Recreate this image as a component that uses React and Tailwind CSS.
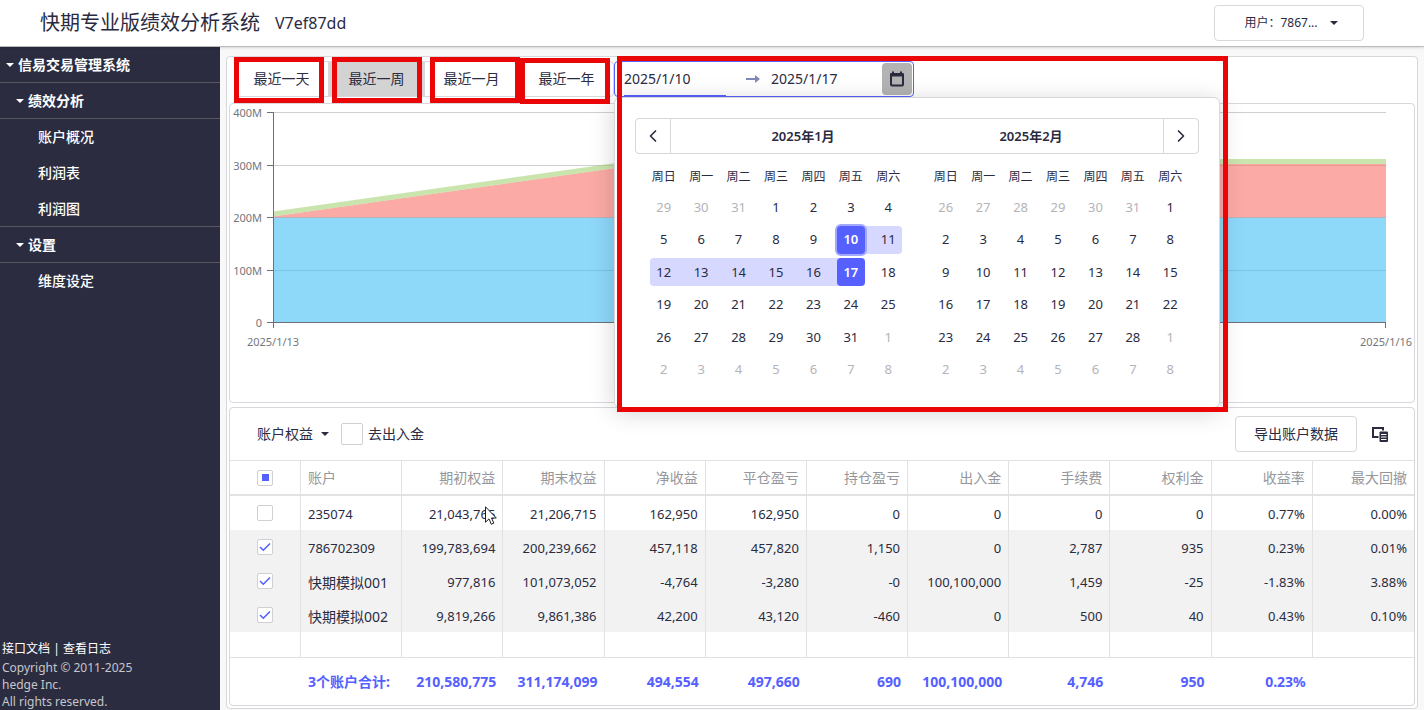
import { useState } from "react";
import { ChevronLeft, ChevronRight } from "lucide-react";

const RANGES = ["最近一天", "最近一周", "最近一月", "最近一年"];

const WEEKDAYS = ["周日", "周一", "周二", "周三", "周四", "周五", "周六"];

// lead = days of the previous month shown, total = days in the month
const MONTHS = [
  { title: "2025年1月", prevLast: 31, lead: 3, total: 31, start: 10, end: 17 },
  { title: "2025年2月", prevLast: 31, lead: 6, total: 28 },
];

const COLUMNS = [
  "账户", "期初权益", "期末权益", "净收益", "平仓盈亏", "持仓盈亏",
  "出入金", "手续费", "权利金", "收益率", "最大回撤",
];

const ROWS = [
  { checked: false, cells: ["235074", "21,043,765", "21,206,715", "162,950", "162,950", "0", "0", "0", "0", "0.77%", "0.00%"] },
  { checked: true, cells: ["786702309", "199,783,694", "200,239,662", "457,118", "457,820", "1,150", "0", "2,787", "935", "0.23%", "0.01%"] },
  { checked: true, cells: ["快期模拟001", "977,816", "101,073,052", "-4,764", "-3,280", "-0", "100,100,000", "1,459", "-25", "-1.83%", "3.88%"] },
  { checked: true, cells: ["快期模拟002", "9,819,266", "9,861,386", "42,200", "43,120", "-460", "0", "500", "40", "0.43%", "0.10%"] },
];

const TOTALS = ["3个账户合计:", "210,580,775", "311,174,099", "494,554", "497,660", "690", "100,100,000", "4,746", "950", "0.23%", ""];

// Red guide frames drawn over the page
const MARKS = [
  "left-[234px] top-[57px] w-[90px] h-[46px]",
  "left-[332px] top-[57px] w-[90px] h-[46px]",
  "left-[430px] top-[57px] w-[90px] h-[46px]",
  "left-[520px] top-[58px] w-[90px] h-[46px]",
  "left-[617px] top-[56px] w-[611px] h-[356px]",
];

function Caret({ className = "" }) {
  return (
    <svg viewBox="0 0 8 4" className={`w-2 h-1 shrink-0 fill-current ${className}`}>
      <path d="M0 0h8L4 4z" />
    </svg>
  );
}

function Header() {
  return (
    <header className="relative z-10 h-[47px] flex items-center pl-10 pr-[60px] bg-white border-b border-[#bbbcbe] shadow-sm">
      <h1 className="text-xl leading-7">快期专业版绩效分析系统</h1>
      <span className="ml-[15px] text-base">V7ef87dd</span>
      <button className="ml-auto w-[150px] h-9 flex items-center justify-center pl-1 border border-[#d8d8dc] rounded text-xs">
        用户：7867...
        <Caret className="ml-3" />
      </button>
    </header>
  );
}

function NavGroup({ label, className }) {
  return (
    <button className={`w-full h-9 flex items-center gap-1 border-b border-[#56575f] font-bold text-sm ${className}`}>
      <Caret />
      {label}
    </button>
  );
}

function NavItem({ label, last }) {
  return (
    <a href="#" className={`h-9 flex items-center pl-[38px] font-medium text-sm ${last ? "border-b border-[#56575f]" : ""}`}>
      {label}
    </a>
  );
}

function Sidebar() {
  return (
    <aside className="w-[220px] shrink-0 flex flex-col bg-[#2b2c40] text-white">
      <nav>
        <NavGroup label="信易交易管理系统" className="pl-[6px]" />
        <NavGroup label="绩效分析" className="pl-4" />
        <NavItem label="账户概况" />
        <NavItem label="利润表" />
        <NavItem label="利润图" last />
        <NavGroup label="设置" className="pl-4" />
        <NavItem label="维度设定" />
      </nav>
      <footer className="mt-auto pl-[2px] text-xs leading-[17px] text-[#c6c6cb]">
        <p className="mb-[2px] text-white">
          <a href="#">接口文档</a> | <a href="#">查看日志</a>
        </p>
        <p>Copyright © 2011-2025</p>
        <p>hedge Inc.</p>
        <p>All rights reserved.</p>
      </footer>
    </aside>
  );
}

function monthDays({ prevLast, lead, total }) {
  return Array.from({ length: 42 }, (_, i) => {
    const n = i - lead + 1;
    if (n < 1) return { day: prevLast + n, outside: true };
    if (n > total) return { day: n - total, outside: true };
    return { day: n, outside: false };
  });
}

function Month({ month }) {
  return (
    <div className="flex-1 px-[10px]">
      <div className="grid grid-cols-7 h-6 items-center text-center text-xs">
        {WEEKDAYS.map((d) => (
          <span key={d}>{d}</span>
        ))}
      </div>
      <div className="mt-[2px] mb-px grid grid-cols-7 grid-rows-6 h-[195px] items-center text-[13px]">
        {monthDays(month).map(({ day, outside }, i) => {
          const inRange = !outside && day >= month.start && day <= month.end;
          const isStart = inRange && day === month.start;
          const isEnd = inRange && day === month.end;
          const openLeft = isStart || i % 7 === 0;
          const openRight = isEnd || i % 7 === 6;
          return (
            <div
              key={i}
              className={`h-7 flex items-center ${inRange ? "bg-[#d6d8ff]" : ""} ${
                openLeft ? "ml-[5px] rounded-l" : "pl-[5px]"
              } ${openRight ? "mr-[5px] rounded-r" : "pr-[5px]"}`}
            >
              <button
                className={`w-full h-7 rounded ${outside ? "text-[#b4b4b9]" : ""} ${
                  isStart || isEnd ? "bg-[#5560ff] text-white font-semibold" : ""
                } ${isStart ? "ring-2 ring-[#a3a8ff]" : ""}`}
              >
                {day}
              </button>
            </div>
          );
        })}
      </div>
    </div>
  );
}

function CalendarPopup() {
  return (
    <div className="absolute z-20 -left-px top-[35px] w-[606px] p-5 bg-white border border-[#d7d7dc] rounded-md shadow-[0_4px_24px_rgba(0,0,0,0.18)]">
      <div className="flex h-9 border border-[#d7d7dc] rounded">
        <button aria-label="上个月" className="w-[35px] flex items-center justify-center border-r border-[#d7d7dc]">
          <ChevronLeft size={20} />
        </button>
        <div className="flex-1 flex px-[18px] items-center text-center text-[13px] font-semibold">
          {MONTHS.map((m) => (
            <span key={m.title} className="flex-1">{m.title}</span>
          ))}
        </div>
        <button aria-label="下个月" className="w-[35px] flex items-center justify-center border-l border-[#d7d7dc]">
          <ChevronRight size={20} />
        </button>
      </div>
      <div className="flex mt-[11px]">
        {MONTHS.map((m) => (
          <Month key={m.title} month={m} />
        ))}
      </div>
    </div>
  );
}

function DatePicker() {
  return (
    <div className="relative w-[300px] h-9 flex items-stretch pl-[9px] border border-[#5560ff] rounded text-sm">
      <input
        aria-label="开始日期"
        defaultValue="2025/1/10"
        className="w-[102px] border-b border-[#5560ff] outline-none"
      />
      <span className="w-[45px] pl-2 flex items-center justify-center text-[#8089b5]">
        <svg viewBox="0 0 14 8" className="w-[14px] h-2" fill="currentColor">
          <path d="M0 3h9V0l5 4-5 4V5H0z" />
        </svg>
      </span>
      <input aria-label="结束日期" defaultValue="2025/1/17" className="flex-1 min-w-0 outline-none" />
      <button aria-label="选择日期" className="w-[30px] h-8 m-px flex items-center justify-center bg-[#b3b3b3] rounded">
        <svg viewBox="0 0 14 16" className="w-[14px] h-4" fill="none" stroke="currentColor">
          <rect x="1" y="3" width="12" height="11.5" rx="1" strokeWidth="2" />
          <path d="M0 4h14" strokeWidth="3" />
          <path d="M3 0.5v3M11 0.5v3" strokeWidth="2" />
        </svg>
      </button>
      <CalendarPopup />
    </div>
  );
}

function RangeBar() {
  const [active, setActive] = useState("最近一周");
  return (
    <div className="flex pl-[5px] pt-1 pb-[6px]">
      <div className="flex text-sm">
        {RANGES.map((r) => (
          <button
            key={r}
            onClick={() => setActive(r)}
            className={`w-[95px] h-9 border border-[#d8d8dc] first:rounded-l last:rounded-r ${
              r === active ? "bg-[#d3d3d3]" : "bg-white"
            }`}
          >
            {r}
          </button>
        ))}
      </div>
      <DatePicker />
    </div>
  );
}

function EquityChart() {
  const ticks = [
    { label: "400M", y: 8 },
    { label: "300M", y: 61 },
    { label: "200M", y: 113 },
    { label: "100M", y: 166 },
    { label: "0", y: 218 },
  ];
  return (
    <section className="border border-[#d7d7dc] rounded">
      <svg viewBox="0 0 1184 298" className="block w-full text-[11px]" fill="#75767c">
        {ticks.map((t) => (
          <g key={t.label}>
            <path d={`M43 ${t.y + 0.5}H1156`} stroke="#cfcfd2" />
            <path d={`M37 ${t.y + 0.5}H43`} stroke="#6e7079" />
            <text x="32" y={t.y + 5} textAnchor="end">{t.label}</text>
          </g>
        ))}
        <g fillOpacity="0.6">
          <path d="M43 113.5H1156V218.5H43z" fill="#43bef5" />
          <path d="M43 112.5L414 60H1156V113.5H43z" fill="#f87169" />
          <path d="M43 107.5L414 55H1156V60H414L43 112.5z" fill="#a7d276" />
        </g>
        <path d="M43.5 8V224M43 218.5H1156M1155.5 218V224" stroke="#6e7079" fill="none" />
        <text x="43" y="242" textAnchor="middle">2025/1/13</text>
        <text x="1156" y="242" textAnchor="middle">2025/1/16</text>
      </svg>
    </section>
  );
}

function Tick({ label, checked = false, partial = false }) {
  const [on, setOn] = useState(checked);
  return (
    <label className="relative mx-auto w-4 h-4 flex items-center justify-center">
      <input
        type="checkbox"
        aria-label={label}
        checked={on}
        onChange={(e) => setOn(e.target.checked)}
        className="absolute inset-0 appearance-none bg-white border border-[#cfcfd4] rounded-xs"
      />
      {partial && <span className="relative w-[7px] h-[7px] bg-[#5560ff]" />}
      {on && (
        <svg viewBox="0 0 12 10" className="relative w-3 h-[10px]" fill="none" stroke="#5560ff" strokeWidth="1.6">
          <path d="M1 5l3.3 3.2L11 1.5" />
        </svg>
      )}
    </label>
  );
}

function AccountTable() {
  return (
    <table className="w-full table-fixed border-separate border-spacing-0 text-right">
      <thead className="text-sm text-[#96979c]">
        <tr className="h-[35px]">
          <th className="w-[71px] border-b-2 border-r border-[#e2e2e4]">
            <Tick label="全选" partial />
          </th>
          {COLUMNS.map((c) => (
            <th key={c} className="px-[7px] font-normal border-b-2 border-r border-[#e2e2e4] nth-2:text-left last:border-r-0">
              {c}
            </th>
          ))}
        </tr>
      </thead>
      <tbody className="text-[13px]">
        {ROWS.map((row) => (
          <tr key={row.cells[0]} className={`h-[34px] ${row.checked ? "bg-[#f2f2f2]" : ""}`}>
            <td className="border-r border-[#e2e2e4]">
              <Tick label={row.cells[0]} checked={row.checked} />
            </td>
            {row.cells.map((cell, i) => (
              <td
                key={i}
                className={`px-[7px] pt-1 whitespace-nowrap border-r border-[#e2e2e4] nth-2:text-left last:border-r-0 ${
                  cell.startsWith("快期") ? "text-sm" : ""
                }`}
              >
                {cell}
              </td>
            ))}
          </tr>
        ))}
        <tr className="h-[25px]">
          <td className="border-r border-[#e2e2e4]" />
          {COLUMNS.map((c) => (
            <td key={c} className="border-r border-[#e2e2e4] last:border-r-0" />
          ))}
        </tr>
      </tbody>
      <tfoot className="text-sm font-bold text-[#5560ff]">
        <tr className="h-[48px]">
          <td className="border-t border-[#e2e2e4]" />
          {TOTALS.map((t, i) => (
            <td key={i} className="px-[7px] whitespace-nowrap border-t border-[#e2e2e4] nth-2:text-left">{t}</td>
          ))}
        </tr>
      </tfoot>
    </table>
  );
}

function AccountPanel() {
  return (
    <section className="mt-1 border border-[#d7d7dc] rounded">
      <div className="h-[53px] flex items-center pl-[27px] pr-[26px] border-b border-[#e2e2e4] text-sm">
        <button className="flex items-center gap-2">
          账户权益
          <Caret />
        </button>
        <label className="ml-3 flex items-center gap-[5px]">
          <input type="checkbox" className="appearance-none w-[22px] h-[22px] border border-[#cfcfd4] rounded-xs" />
          去出入金
        </label>
        <button className="ml-auto w-[122px] h-9 border border-[#d7d7dc] rounded">导出账户数据</button>
        <button aria-label="选择列" className="ml-[15px]">
          <svg viewBox="0 0 16 16" className="w-4 h-4" fill="none" stroke="currentColor">
            <rect x="1" y="2" width="10" height="9" strokeWidth="2" />
            <rect x="6.500" y="4.500" width="10" height="12" fill="#fff" stroke="none" />
            <rect x="7.500" y="5.500" width="8.500" height="10.500" rx="1" fill="currentColor" stroke="none" />
            <path d="M9 8.500h5.500M9 11h5.500M9 13.500h5.500" stroke="#fff" />
          </svg>
        </button>
      </div>
      <AccountTable />
    </section>
  );
}

function Pointer() {
  return (
    <svg viewBox="0 0 12 19" className="absolute z-40 left-[485px] top-[506px] w-3 h-[19px] pointer-events-none">
      <path d="M0.500 0.800V16.200L4 12.900L6.300 18.200L8.800 17.100L6.500 12H11.300z" fill="#fff" stroke="#1c1c28" />
    </svg>
  );
}

export default function App() {
  return (
    <div className="relative min-h-screen flex flex-col bg-[#f8f8f8] text-[#2a2b3f] font-['Noto_Sans','Noto_Sans_CJK_SC',sans-serif]">
      <Header />
      <div className="flex-1 flex">
        <Sidebar />
        <main className="flex-1 min-w-0 px-[6px] pt-[9px] pb-px">
          <div className="p-[2px] pt-0 bg-white border border-[#d7d7dc] rounded">
            <RangeBar />
            <EquityChart />
            <AccountPanel />
          </div>
        </main>
      </div>
      {MARKS.map((m) => (
        <div key={m} className={`absolute z-30 border-5 border-[#ea0606] pointer-events-none ${m}`} />
      ))}
      <Pointer />
    </div>
  );
}
